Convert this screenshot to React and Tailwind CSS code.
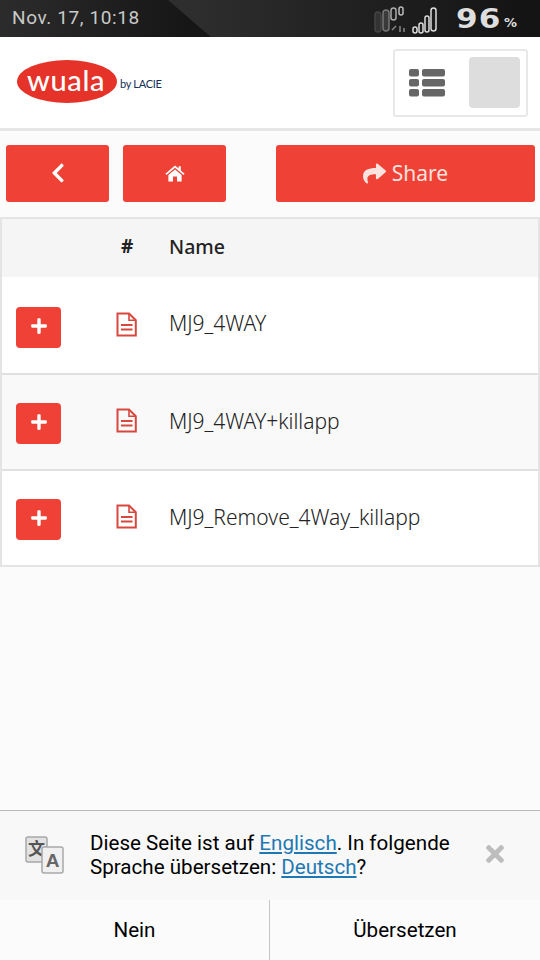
import React from "react";
import { FaChevronLeft, FaShare, FaPlus, FaTimes } from "react-icons/fa";

const rows = [
  { name: "MJ9_4WAY", bg: "bg-white", h: "h-[96px]" },
  { name: "MJ9_4WAY+killapp", bg: "bg-[#f9f9f9]", h: "h-[96px]" },
  { name: "MJ9_Remove_4Way_killapp", bg: "bg-white", h: "h-[96px]" },
];

function HomeIcon() {
  return (
    <svg width="20" height="17" viewBox="0 0 20 17" fill="#fff">
      <path d="M10 0.5 L13.6 3.6 V1.2 H15.8 V5.5 L19.6 8.8 L18.5 10 L10 2.8 L1.5 10 L0.4 8.8 Z" />
      <path d="M10 4.4 L16.6 10 V16.5 H12 V11.5 H8 V16.5 H3.4 V10 Z" />
    </svg>
  );
}

function ListIcon() {
  return (
    <svg width="36" height="28" viewBox="0 0 36 28" fill="#666">
      <rect x="0" y="0" width="10" height="7.5" rx="2" />
      <rect x="13" y="0" width="23" height="7.5" rx="2" />
      <rect x="0" y="10" width="10" height="7.5" rx="2" />
      <rect x="13" y="10" width="23" height="7.5" rx="2" />
      <rect x="0" y="20" width="10" height="7.5" rx="2" />
      <rect x="13" y="20" width="23" height="7.5" rx="2" />
    </svg>
  );
}

function FileIcon() {
  return (
    <svg width="21" height="25" viewBox="0 0 21 25" fill="none" stroke="#d9483f" strokeWidth="2">
      <path d="M1.5 1.5 H13 L19.8 8.2 V23.5 H1.5 Z" />
      <path d="M13 1.5 V8.2 H19.8" strokeWidth="1.6" />
      <path d="M5 13 H16.5 M5 17.5 H16.5" strokeWidth="1.8" />
    </svg>
  );
}

function TranslateIcon() {
  return (
    <svg width="40" height="38" viewBox="0 0 40 38">
      <rect x="1" y="1" width="21" height="25" rx="2" fill="#e2e2e2" stroke="#a8a8a8" strokeWidth="1.5" />
      <text x="11.5" y="19" textAnchor="middle" fontSize="17" fontWeight="700" fill="#555" fontFamily="'Noto Sans CJK SC', sans-serif">文</text>
      <rect x="17" y="11" width="21" height="26" rx="2" fill="#f0f0f0" stroke="#a8a8a8" strokeWidth="1.5" />
      <text x="27.5" y="31" textAnchor="middle" fontSize="19" fontWeight="700" fill="#666" fontFamily="'Liberation Sans', sans-serif">A</text>
    </svg>
  );
}

function StatusIcons() {
  return (
    <svg width="76" height="34" viewBox="-6 0 76 34" fill="none" strokeWidth="1.5">
      <rect x="-4" y="10" width="6" height="20" rx="3" stroke="#444" fill="#333" />
      <rect x="4" y="8" width="6" height="21" rx="3" stroke="#777" fill="#3a3a3a" />
      <rect x="12" y="6" width="5" height="12" rx="2.5" stroke="#aaa" />
      <rect x="20" y="5" width="4" height="8" rx="2" stroke="#bbb" />
      <path d="M13 28 L17 24 M21 24 V30 M25 26 V30" stroke="#888" />
      <rect x="34" y="25" width="4" height="6" rx="2" stroke="#ddd" />
      <rect x="40" y="21" width="4" height="10" rx="2" stroke="#ddd" />
      <rect x="46" y="14" width="4" height="16" rx="2" stroke="#ddd" />
      <rect x="52" y="6" width="5" height="23" rx="2.5" stroke="#ddd" />
    </svg>
  );
}

export default function App() {
  return (
    <div className="w-[540px] h-[960px] flex flex-col bg-[#fbfbfb] overflow-hidden font-['Open_Sans',sans-serif]">
      {/* Statusleiste */}
      <div className="relative h-[37px] shrink-0 flex items-center justify-between bg-gradient-to-r from-[#2c2c2c] to-[#161616] to-[35%] pl-3 pr-[23px] overflow-hidden">
        <div className="absolute inset-0 bg-gradient-to-r from-[#2e2e2e] from-[35%] to-[#131313] [clip-path:polygon(168px_0,100%_0,100%_100%,211px_100%)]"></div>
        <span className="relative font-['Roboto',sans-serif] text-[19px] tracking-[0.6px] text-[#c9c9c9]">Nov. 17, 10:18</span>
        <div className="relative flex items-center">
          <StatusIcons />
          <span className="ml-[10px] font-['DejaVu_Sans',sans-serif] font-bold text-[27px] leading-none tracking-[1px] text-[#dedede] scale-x-115">96</span>
          <span className="ml-[5px] mt-[8px] font-['DejaVu_Sans',sans-serif] font-bold text-[13px] leading-none text-[#dedede]">%</span>
        </div>
      </div>

      {/* Kopf */}
      <div className="h-[94px] shrink-0 flex items-center justify-between bg-white border-b-[3px] border-[#e6e6e6] pl-[17px] pr-[12px]">
        <div className="flex items-center mb-[3px]">
          <div className="w-[100px] h-[43px] rounded-[50%] bg-[#e5332a] flex items-center justify-center">
            <span className="font-['Lato',sans-serif] text-[29px] leading-none font-medium tracking-[0.6px] text-white pb-[3px] pr-[2px]">wuala</span>
          </div>
          <span className="ml-[3px] mt-[7px] font-['Lato',sans-serif] text-[11px] text-[#12305a] tracking-[-0.3px]">by LACIE</span>
        </div>
        <div className="w-[135px] h-[68px] flex items-center justify-between bg-white border-2 border-[#e8e8e8] rounded-[3px] pl-[14px] pr-[6px]">
          <ListIcon />
          <div className="w-[51px] h-[51px] bg-[#dddddd] rounded-[4px]"></div>
        </div>
      </div>

      {/* Buttons */}
      <div className="flex mt-[14px] pl-[6px] pr-[5px] gap-[14px]">
        <button className="w-[103px] h-[57px] flex items-center justify-center bg-[#ef4135] rounded-[3px] text-white">
          <FaChevronLeft size={22} className="mb-[2px]" />
        </button>
        <button className="w-[103px] h-[57px] flex items-center justify-center bg-[#ef4135] rounded-[3px]">
          <HomeIcon />
        </button>
        <button className="ml-[36px] flex-1 h-[57px] flex items-center justify-center gap-[6px] bg-[#ef4135] rounded-[3px] text-[#fde3df]">
          <FaShare size={23} />
          <span className="text-[21px] leading-none font-['Noto_Sans',sans-serif]">Share</span>
        </button>
      </div>

      {/* Tabelle */}
      <div className="mt-[15px] border-2 border-[#e4e4e4] font-['Noto_Sans',sans-serif] text-[#222]">
        <div className="h-[58px] flex items-center bg-[#f5f5f5] text-[19.5px]">
          <span className="w-[118px]"></span>
          <span className="w-[50px] font-bold text-[19px] pl-[1px] mb-[3px]">#</span>
          <span className="font-medium mb-[3px] -ml-[1px]">Name</span>
        </div>
        {rows.map((r, i) => (
          <div key={r.name} className={`${r.h} ${r.bg} flex items-center ${i > 0 ? "border-t-2 border-[#e0e0e0]" : ""}`}>
            <div className={`w-[114px] pl-[14px] ${i > 0 ? "mt-[2px]" : "mt-[4px]"}`}>
              <div className="w-[45px] h-[41px] rounded-[4px] bg-[#ef4135] flex items-center justify-center text-white">
                <FaPlus size={18} className="mb-[3px]" />
              </div>
            </div>
            <div className={`w-[53px] ${i > 0 ? "mb-[4px]" : "mb-[2px]"}`}>
              <FileIcon />
            </div>
            <span className={`text-[21px] font-light text-[#222] ${i > 0 ? "mb-[1px]" : "mb-[3px]"}`}>{r.name}</span>
          </div>
        ))}
      </div>

      <div className="flex-1"></div>

      {/* Uebersetzungsleiste */}
      <div className="h-[90px] shrink-0 flex items-center bg-[#f8f8f8] border-t border-[#b9b9b9] font-['Roboto',sans-serif] text-black">
        <div className="pl-[25px] w-[90px] mb-[2px]">
          <TranslateIcon />
        </div>
        <div className="w-[385px] shrink-0 text-[20.6px] leading-[24px] mb-[1px]">
          <div>
            <span>Diese Seite ist auf </span>
            <a className="text-[#1f78b4] underline">Englisch</a>
            <span>. In folgende</span>
          </div>
          <div>
            <span>Sprache übersetzen: </span>
            <a className="text-[#1f78b4] underline">Deutsch</a>
            <span>?</span>
          </div>
        </div>
        <FaTimes size={26} className="text-[#bdbdbd] ml-[7px] mb-[4px]" />
      </div>
      <div className="h-[60px] shrink-0 flex bg-[#fbfbfb] font-['Roboto',sans-serif] text-[20.6px] text-black">
        <div className="w-[270px] flex items-center justify-center border-r border-[#c4c4c4] pt-[1px]">Nein</div>
        <div className="flex-1 flex items-center justify-center pt-[1px]">Übersetzen</div>
      </div>
    </div>
  );
}
